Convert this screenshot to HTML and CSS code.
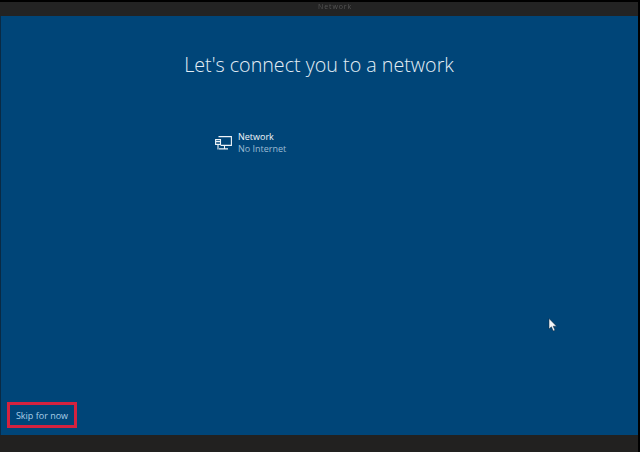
FILE: index.html
```html
<!DOCTYPE html>
<html lang="en">
<head>
<meta charset="utf-8">
<title>Let's connect you to a network</title>
<link rel="stylesheet" href="styles.css">
</head>
<body>
<div class="screen">
  <header class="topbar"><span class="topbar-title">Network</span></header>
  <main class="panel">
    <h1 class="title">Let's connect you to a network</h1>
    <div class="network">
      <svg class="network-icon" viewBox="0 0 17 14" width="17" height="14" aria-hidden="true">
        <path class="stroke" d="M3.5 0.6H16.4V9.4H5.5M9.5 9.4V12.6M4 12.9H13"/>
        <path class="stroke" d="M0.6 3.6H5.5V8.4H0.6Z M0.6 5.6H5.5M3 8.4V13.4"/>
      </svg>
      <div class="network-text">
        <div class="network-name">Network</div>
        <div class="network-status">No Internet</div>
      </div>
    </div>
    <div class="footer">
      <a class="skip">Skip for now</a>
    </div>
    <svg class="cursor" viewBox="0 0 10 14" width="10" height="14" aria-hidden="true">
      <path d="M1 0.5V11L3.4 8.8L5.2 13L7 12.2L5.2 8.2H8.6Z"/>
    </svg>
  </main>
  <footer class="bottombar"></footer>
</div>
</body>
</html>
```
FILE: styles.css
```css
html, body {
  margin: 0;
  padding: 0;
  background: #000;
}
.screen {
  width: 640px;
  height: 452px;
  display: flex;
  flex-direction: column;
  overflow: hidden;
  font-family: "Open Sans", "Liberation Sans", sans-serif;
  box-sizing: border-box;
  padding-right: 2px;
  position: relative;
  filter: blur(0.35px);
}
.topbar {
  height: 14px;
  margin-top: 2px;
  background: #232323;
  flex: none;
  position: relative;
  box-shadow: 0 -2px 0 #000;
}
.topbar-title {
  position: absolute;
  left: 318px;
  top: 0;
  font-size: 7px;
  line-height: 9px;
  letter-spacing: 0.9px;
  color: #555;
}
.topbar::after {
  content: "";
  position: absolute;
  left: 274px;
  width: 122px;
  bottom: -1px;
  height: 1px;
  background: #7f9db5;
}
.panel {
  flex: 1;
  background: #004578;
  display: flex;
  flex-direction: column;
  position: relative;
  border-left: 1px solid #0a2a44;
}
.title {
  margin: 34px 0 0;
  font-size: 19.7px;
  line-height: 30px;
  font-weight: 300;
  color: #e4eef6;
  text-align: center;
  padding-right: 1px;
}
.network {
  display: flex;
  align-items: center;
  gap: 6px;
  margin: 51px 0 0 214px;
}
.network-icon {
  flex: none;
}
.stroke {
  fill: none;
  stroke: #eef4f8;
  stroke-width: 1.1;
}
.network-text {
  font-size: 9px;
  line-height: 12px;
}
.network-name {
  color: #f2f6fa;
  font-weight: 500;
}
.network-status {
  color: #9dbcd4;
}
.footer {
  margin-top: auto;
  padding: 0 0 7px 6px;
  display: flex;
}
.skip {
  width: 70px;
  height: 26px;
  box-sizing: border-box;
  border: 3px solid #d3223f;
  display: flex;
  align-items: center;
  justify-content: center;
  font-size: 9px;
  color: #a8cfe8;
}
.cursor {
  position: absolute;
  left: 547px;
  top: 302px;
}
.cursor path {
  fill: #f4f7fa;
  stroke: #10263a;
  stroke-width: 0.5;
}
.bottombar {
  height: 17px;
  background: #222120;
  flex: none;
}
```
